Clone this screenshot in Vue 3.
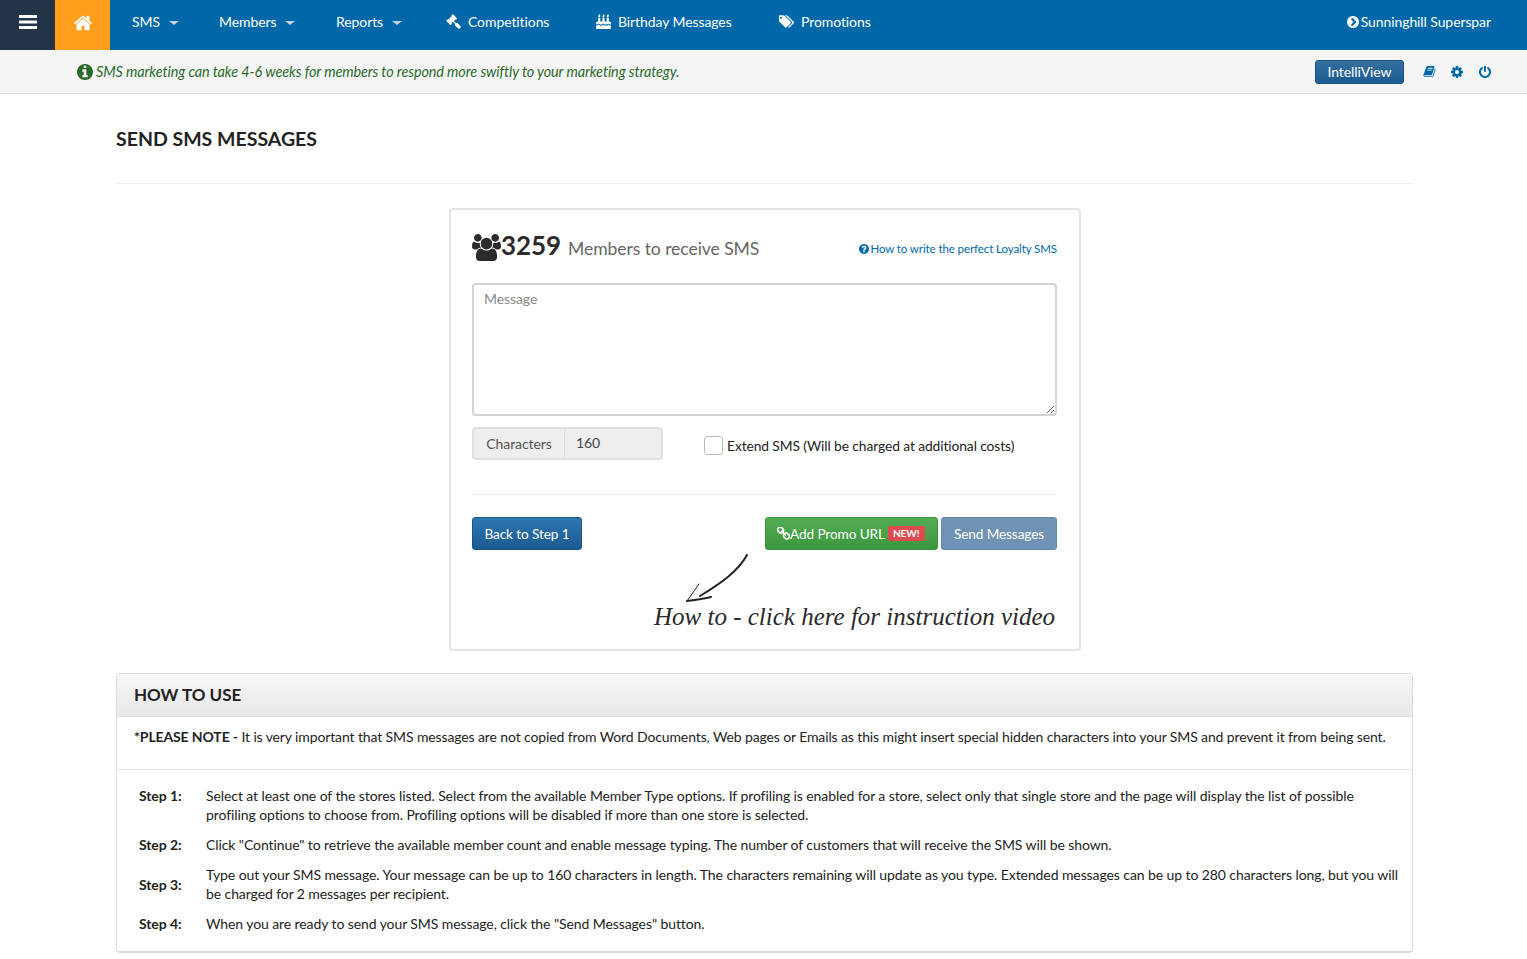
<template>
    <div class="page">
        <header class="topbar">
            <button class="topbar__burger" aria-label="Menu">
                <svg width="18" height="14" viewBox="0 0 18 14" fill="#fff">
                    <rect y="0" width="18" height="3" rx="0.5"></rect>
                    <rect y="5.5" width="18" height="3" rx="0.5"></rect>
                    <rect y="11" width="18" height="3" rx="0.5"></rect>
                </svg>
            </button>
            <a class="topbar__home" href="#">
                <svg width="20" height="20" viewBox="0 0 1792 1792" fill="#fff"><path :d="icons.home"></path></svg>
            </a>
            <nav class="topbar__nav">
                <a v-for="item in menus" :key="item.label" class="topbar__item" :style="{ width: item.width + 'px' }" href="#">{{ item.label }}<i class="caret"></i></a>
                <a v-for="item in links" :key="item.label" class="topbar__item topbar__item--icon" :style="{ width: item.width + 'px' }" href="#">
                    <svg width="15" height="15" :viewBox="item.box" fill="#fff"><path :d="item.icon"></path></svg>
                    {{ item.label }}
                </a>
            </nav>
            <a class="topbar__store" href="#">
                <svg width="12" height="12" viewBox="128 128 1536 1536" fill="#fff"><path :d="icons.chevron"></path></svg>
                Sunninghill Superspar
            </a>
        </header>

        <div class="tipbar">
            <svg class="tipbar__info" width="16" height="16" viewBox="128 128 1536 1536" fill="#2b6a2c"><path :d="icons.info"></path></svg>
            <em class="tipbar__text">SMS marketing can take 4-6 weeks for members to respond more swiftly to your marketing strategy.</em>
            <button class="tipbar__btn">IntelliView</button>
            <a class="tipbar__icon" href="#"><svg width="13" height="13" viewBox="0 0 1792 1792" fill="#0068a8"><path :d="icons.book"></path></svg></a>
            <a class="tipbar__icon" href="#"><svg width="12" height="12" viewBox="128 128 1536 1536" fill="#0068a8"><path :d="icons.cog"></path></svg></a>
            <a class="tipbar__icon" href="#"><svg width="12" height="12" viewBox="128 128 1536 1536" fill="#0068a8"><path :d="icons.power"></path></svg></a>
        </div>

        <main class="content">
            <h1 class="content__title">SEND SMS MESSAGES</h1>

            <section class="card">
                <div class="card__head">
                    <svg width="29" height="27" viewBox="0 0 1920 1792" fill="#2b2b2b"><path :d="icons.users"></path></svg>
                    <strong class="card__count">3259</strong>
                    <span class="card__sub">Members to receive SMS</span>
                    <a class="card__help" href="#">
                        <svg width="10" height="10" viewBox="128 128 1536 1536" fill="#0068a8"><path :d="icons.question"></path></svg>How to write the perfect Loyalty SMS
                    </a>
                </div>

                <textarea class="card__message" placeholder="Message"></textarea>

                <div class="card__options">
                    <div class="chars">
                        <span class="chars__label">Characters</span>
                        <span class="chars__value">160</span>
                    </div>
                    <label class="extend">
                        <input class="extend__box" type="checkbox">
                        Extend SMS (Will be charged at additional costs)
                    </label>
                </div>

                <div class="card__actions">
                    <button class="btn btn--blue">Back to Step 1</button>
                    <div class="card__actions-right">
                        <button class="btn btn--green">
                            <svg width="13" height="13" viewBox="128 128 1536 1536" fill="#fff"><path :d="icons.link"></path></svg>Add Promo URL
                            <span class="badge">NEW!</span>
                        </button>
                        <button class="btn btn--muted">Send Messages</button>
                    </div>
                </div>

                <a class="howto" href="#">
                    <svg class="howto__arrow" width="70" height="50" viewBox="0 0 70 50" fill="none" stroke="#222" stroke-linecap="round">
                        <path d="M62 1C53 17 38 28 15 42" stroke-width="2"></path>
                        <path d="M14 30L2 47" stroke-width="1"></path>
                        <path d="M2 47C10 46 18 45 26 43" stroke-width="2"></path>
                    </svg>
                    <span class="howto__text">How to - click here for instruction video</span>
                </a>
            </section>

            <section class="panel">
                <h2 class="panel__head">HOW TO USE</h2>
                <p class="panel__note"><b>*PLEASE NOTE -</b> <span>It is very important that SMS messages are not copied from Word Documents, Web pages or Emails as this might insert special hidden characters into your SMS and prevent it from being sent.</span></p>
                <div class="steps">
                    <template v-for="step in steps" :key="step.name">
                        <b class="steps__name" :class="{ 'steps__name--top': step.top }">{{ step.name }}</b>
                        <span class="steps__text">{{ step.text }}</span>
                    </template>
                </div>
            </section>
        </main>
    </div>
</template>

<script setup>
const icons = {
    home: 'M1472 992v480q0 26-19 45t-45 19h-384v-384h-256v384h-384q-26 0-45-19t-19-45v-480q0-1 .5-3t.5-3l575-474 575 474q1 2 1 6zm223-69l-62 74q-8 9-21 11h-3q-13 0-21-7l-692-577-692 577q-12 8-24 7-13-2-21-11l-62-74q-8-10-7-23.5t11-21.5l719-599q32-26 76-26t76 26l244 204v-195q0-14 9-23t23-9h192q14 0 23 9t9 23v408l219 182q10 8 11 21.5t-7 23.5z',
    users: 'M593 896q-162 5-265 128h-134q-82 0-138-40.5t-56-118.5q0-353 124-353 6 0 43.5 21t97.5 42.5 119 21.5q67 0 133-23-5 37-5 66 0 139 81 256zm1071 637q0 120-73 189.5t-194 69.5h-874q-121 0-194-69.5t-73-189.5q0-53 3.5-103.5t14-109 26.5-108.5 43-97.5 62-81 85.5-53.5 111.5-20q10 0 43 21.5t73 48 107 48 135 21.5 135-21.5 107-48 73-48 43-21.5q61 0 111.5 20t85.5 53.5 62 81 43 97.5 26.5 108.5 14 109 3.5 103.5zm-1024-1277q0 106-75 181t-181 75-181-75-75-181 75-181 181-75 181 75 75 181zm704 384q0 159-112.5 271.5t-271.5 112.5-271.5-112.5-112.5-271.5 112.5-271.5 271.5-112.5 271.5 112.5 112.5 271.5zm576 225q0 78-56 118.5t-138 40.5h-134q-103-123-265-128 81-117 81-256 0-29-5-66 66 23 133 23 59 0 119-21.5t97.5-42.5 43.5-21q124 0 124 353zm-128-609q0 106-75 181t-181 75-181-75-75-181 75-181 181-75 181 75 75 181z',
    info: 'M1152 1376v-160q0-14-9-23t-23-9h-96v-512q0-14-9-23t-23-9h-320q-14 0-23 9t-9 23v160q0 14 9 23t23 9h96v320h-96q-14 0-23 9t-9 23v160q0 14 9 23t23 9h448q14 0 23-9t9-23zm-128-896v-160q0-14-9-23t-23-9h-192q-14 0-23 9t-9 23v160q0 14 9 23t23 9h192q14 0 23-9t9-23zm640 416q0 209-103 385.5t-279.5 279.5-385.5 103-385.5-103-279.5-279.5-103-385.5 103-385.5 279.5-279.5 385.5-103 385.5 103 279.5 279.5 103 385.5z',
    question: 'M1024 1376v-192q0-14-9-23t-23-9h-192q-14 0-23 9t-9 23v192q0 14 9 23t23 9h192q14 0 23-9t9-23zm256-672q0-88-55.5-163t-138.5-116-170-41q-243 0-371 213-15 24 8 42l132 100q7 6 19 6 16 0 25-12 53-68 86-92 34-24 86-24 48 0 85.5 26t37.5 59q0 38-20 61t-68 45q-63 28-115.5 86.5t-52.5 125.5v36q0 14 9 23t23 9h192q14 0 23-9t9-23q0-19 21.5-49.5t54.5-49.5q32-18 49-28.5t46-35 44.5-48 28-60.5 12.5-81zm384 192q0 209-103 385.5t-279.5 279.5-385.5 103-385.5-103-279.5-279.5-103-385.5 103-385.5 279.5-279.5 385.5-103 385.5 103 279.5 279.5 103 385.5z',
    chevron: 'M845 1395l454-454q19-19 19-45t-19-45l-454-454q-19-19-45-19t-45 19l-102 102q-19 19-19 45t19 45l307 307-307 307q-19 19-19 45t19 45l102 102q19 19 45 19t45-19zm819-499q0 209-103 385.5t-279.5 279.5-385.5 103-385.5-103-279.5-279.5-103-385.5 103-385.5 279.5-279.5 385.5-103 385.5 103 279.5 279.5 103 385.5z',
    cog: 'M1152 896q0-106-75-181t-181-75-181 75-75 181 75 181 181 75 181-75 75-181zm512-109v222q0 12-8 23t-20 13l-185 28q-19 54-39 91 35 50 107 138 10 12 10 25t-9 23q-27 37-99 108t-94 71q-12 0-26-9l-138-108q-44 23-91 38-16 136-29 186-7 28-36 28h-222q-14 0-24.5-8.5t-11.5-21.5l-28-184q-49-16-90-37l-141 107q-10 9-25 9-14 0-25-11-126-114-165-168-7-10-7-23 0-12 8-23 15-21 51-66.5t54-70.5q-27-50-41-99l-183-27q-13-2-21-12.5t-8-23.5v-222q0-12 8-23t19-13l186-28q14-46 39-92-40-57-107-138-10-12-10-24 0-10 9-23 26-36 98.5-107.5t94.5-71.5q13 0 26 10l138 107q44-23 91-38 16-136 29-186 7-28 36-28h222q14 0 24.5 8.5t11.5 21.5l28 184q49 16 90 37l142-107q9-9 24-9 13 0 25 10 129 119 165 170 7 8 7 22 0 12-8 23-15 21-51 66.5t-54 70.5q26 50 41 98l183 28q13 2 21 12.5t8 23.5z',
    power: 'M1664 896q0 156-61 298t-164 245-245 164-298 61-298-61-245-164-164-245-61-298q0-182 80.5-343t226.5-270q43-32 95.5-25t83.5 50q32 42 24.5 94.5t-49.5 84.5q-98 74-151.5 181t-53.5 228q0 104 40.5 198.5t109.5 163.5 163.5 109.5 198.5 40.5 198.5-40.5 163.5-109.5 109.5-163.5 40.5-198.5q0-121-53.5-228t-151.5-181q-42-32-49.5-84.5t24.5-94.5q31-43 84-50t95 25q146 109 226.5 270t80.5 343zm-640-768v640q0 52-38 90t-90 38-90-38-38-90v-640q0-52 38-90t90-38 90 38 38 90z',
    tags: 'M384 448q0-53-37.5-90.5t-90.5-37.5-90.5 37.5-37.5 90.5 37.5 90.5 90.5 37.5 90.5-37.5 37.5-90.5zm1067 576q0 53-37 90l-491 492q-39 37-91 37-53 0-90-37l-715-716q-38-37-64.5-101t-26.5-117v-416q0-52 38-90t90-38h416q53 0 117 26.5t102 64.5l715 714q37 39 37 91zm384 0q0 53-37 90l-491 492q-39 37-91 37-36 0-59-14t-53-45l470-470q37-37 37-90 0-52-37-91l-715-714q-38-38-102-64.5t-117-26.5h224q53 0 117 26.5t102 64.5l715 714q37 39 37 91z',
    gavel: 'M1771 1536q0 53-37 90l-107 108q-39 37-91 37-53 0-90-37l-363-364q-38-36-38-90 0-53 43-96l-256-256-126 126q-14 14-34 14t-34-14q2 2 12.5 12t12.5 13 10 11.5 10 13.5 6 13.5 5.5 16.5 1.5 18q0 38-28 68-3 3-16.5 18t-19 20.5-18.5 16.5-22 15.5-22 9-26 4.5q-40 0-68-28l-408-408q-28-28-28-68 0-13 4.5-26t9-22 15.5-22 16.5-18.5 20.5-19 18-16.5q30-28 68-28 10 0 18 1.5t16.5 5.5 13.5 6 13.5 10 11.5 10 13 12.5 12 12.5q-14-14-14-34t14-34l348-348q14-14 34-14t34 14q-2-2-12.5-12t-12.5-13-10-11.5-10-13.5-6-13.5-5.5-16.5-1.5-18q0-38 28-68 3-3 16.5-18t19-20.5 18.5-16.5 22-15.5 22-9 26-4.5q40 0 68 28l408 408q28 28 28 68 0 13-4.5 26t-9 22-15.5 22-16.5 18.5-20.5 19-18 16.5q-30 28-68 28-10 0-18-1.5t-16.5-5.5-13.5-6-13.5-10-11.5-10-13-12.5-12-12.5q14 14 14 34t-14 34l-126 126 256 256q43-43 96-43 52 0 91 37l363 363q37 39 37 91z',
    cake: 'M1792 1408v384h-1792v-384q45 0 85-14t59-27.5 47-37.5q30-27 51.5-38t56.5-11q24 0 44 7t31 15 33 27q29 25 47 38t58 27 86 14q45 0 85-14.5t58-27 48-37.5q21-19 32.5-27t31-15 43.5-7q35 0 56.5 11t51.5 38q28 24 47 37.5t59 27.5 85 14 85-14 59-27.5 47-37.5q30-27 51.5-38t56.5-11q34 0 55.5 11t51.5 38q29 25 47 38t58 27 86 14zm0-320v192q-24 0-44-7t-31-15-33-27q-29-25-47-38t-58-27-85-14q-46 0-86 14t-58 27-47 38q-22 19-33 27t-31 15-44 7q-35 0-56.5-11t-51.5-38q-29-25-47-38t-58-27-86-14q-45 0-85 14.5t-58 27-48 37.5q-21 19-32.5 27t-31 15-43.5 7q-35 0-56.5-11t-51.5-38q-28-24-47-37.5t-59-27.5-85-14q-46 0-86 14t-58 27-47 38q-30 27-51.5 38t-56.5 11v-192q0-80 56-136t136-56h64v-448h256v448h256v-448h256v448h256v-448h256v448h64q80 0 136 56t56 136zm-1280-864q0 77-36 118.5t-92 41.5q-53 0-90.5-37.5t-37.5-90.5q0-29 9.5-51t23.5-34 31-28 31-31.5 23.5-44.5 9.5-67q38 0 83 74t45 150zm512 0q0 77-36 118.5t-92 41.5q-53 0-90.5-37.5t-37.5-90.5q0-29 9.5-51t23.5-34 31-28 31-31.5 23.5-44.5 9.5-67q38 0 83 74t45 150zm512 0q0 77-36 118.5t-92 41.5q-53 0-90.5-37.5t-37.5-90.5q0-29 9.5-51t23.5-34 31-28 31-31.5 23.5-44.5 9.5-67q38 0 83 74t45 150z',
    book: 'M1703 478q40 57 18 129l-275 906q-19 64-76.5 107.5t-122.5 43.5h-923q-77 0-148.5-53.5t-99.5-131.5q-24-67-2-127 0-4 3-27t4-37q1-8-3-21.5t-3-19.5q2-11 8-21t16.5-23.5 16.5-23.5q23-38 45-91.5t30-91.5q3-10 .5-30t-.5-28q3-11 17-28t17-23q21-36 42-92t25-90q1-9-2.5-32t.5-28q4-13 22-30.5t22-22.5q19-26 42.5-84.5t27.5-96.5q1-8-3-25.5t-2-26.5q2-8 9-18t18-23 17-21q8-12 16.5-30.5t15-35 16-36 19.5-32 26.5-23.5 36-11.5 47.5 5.5l-1 3q38-9 51-9h761q74 0 114 56t18 130l-274 906q-36 119-71.5 153.5t-128.5 34.5h-869q-27 0-38 15-11 16-1 43 24 70 144 70h923q29 0 56-15.5t35-41.5l300-987q7-22 5-57 38 15 59 43zm-1064 2q-4 13 2 22.5t20 9.5h608q13 0 25.5-9.5t16.5-22.5l21-64q4-13-2-22.5t-20-9.5h-608q-13 0-25.5 9.5t-16.5 22.5zm-83 256q-4 13 2 22.5t20 9.5h608q13 0 25.5-9.5t16.5-22.5l21-64q4-13-2-22.5t-20-9.5h-608q-13 0-25.5 9.5t-16.5 22.5z',
    link: 'M1520 1216q0-40-28-68l-208-208q-28-28-68-28-42 0-72 32 3 3 19 18.5t21.5 21.5 15 19 13 25.5 3.5 27.5q0 40-28 68t-68 28q-15 0-27.5-3.5t-25.5-13-19-15-21.5-21.5-18.5-19q-33 31-33 73 0 40 28 68l206 207q27 27 68 27 40 0 68-26l147-146q28-28 28-67zm-703-705q0-40-28-68l-206-207q-28-28-68-28-39 0-68 27l-147 146q-28 28-28 67 0 40 28 68l208 208q27 27 68 27 42 0 72-31-3-3-19-18.5t-21.5-21.5-15-19-13-25.5-3.5-27.5q0-40 28-68t68-28q15 0 27.5 3.5t25.5 13 19 15 21.5 21.5 18.5 19q33-31 33-73zm895 705q0 120-85 203l-147 146q-83 83-203 83-121 0-204-85l-206-207q-83-83-83-203 0-123 88-209l-88-88q-86 88-208 88-120 0-204-84l-208-208q-84-84-84-204t85-203l147-146q83-83 203-83 121 0 204 85l206 207q83 83 83 203 0 123-88 209l88 88q86-88 208-88 120 0 204 84l208 208q84 84 84 204z'
}

// ширины пунктов подобраны по макету
const menus = [
    { label: 'SMS', width: 87 },
    { label: 'Members', width: 117 },
    { label: 'Reports', width: 132 }
]

const links = [
    { label: 'Competitions', icon: icons.gavel, box: '0 0 1792 1792', width: 150 },
    { label: 'Birthday Messages', icon: icons.cake, box: '0 0 1792 1792', width: 183 },
    { label: 'Promotions', icon: icons.tags, box: '0 0 1835 1792', width: 140 }
]

const steps = [
    { name: 'Step 1:', top: true, text: 'Select at least one of the stores listed. Select from the available Member Type options. If profiling is enabled for a store, select only that single store and the page will display the list of possible profiling options to choose from. Profiling options will be disabled if more than one store is selected.' },
    { name: 'Step 2:', text: 'Click "Continue" to retrieve the available member count and enable message typing. The number of customers that will receive the SMS will be shown.' },
    { name: 'Step 3:', text: 'Type out your SMS message. Your message can be up to 160 characters in length. The characters remaining will update as you type. Extended messages can be up to 280 characters long, but you will be charged for 2 messages per recipient.' },
    { name: 'Step 4:', text: 'When you are ready to send your SMS message, click the "Send Messages" button.' }
]
</script>

<style>
body {
    background: #fff;
}
</style>

<style scoped>
.page {
    font-family: Lato, "Noto Sans", sans-serif;
    font-size: 14px;
    line-height: 19px;
    letter-spacing: -0.09px;
    color: #222;
}

a {
    text-decoration: none;
    color: inherit;
}

button {
    font-family: inherit;
    letter-spacing: inherit;
    white-space: nowrap;
}

/* top navigation */
.topbar {
    display: flex;
    align-items: stretch;
    height: 50px;
    background: #0068a8;
    color: #fff;
}

.topbar__burger {
    width: 55px;
    padding: 0 0 4px;
    border: none;
    background: #223445;
}

.topbar__home {
    display: flex;
    align-items: center;
    justify-content: center;
    width: 55px;
    padding-bottom: 4px;
    background: #ff9f1a;
}

.topbar__nav {
    display: flex;
}

.topbar__item {
    display: flex;
    align-items: center;
    gap: 9px;
    box-sizing: border-box;
    padding: 0 0 7px 22px;
}

.topbar__item--icon {
    gap: 7px;
    padding-left: 0;
}

.caret {
    width: 0;
    height: 0;
    margin-top: 3px;
    border-top: 4px solid #c4d3e0;
    border-left: 5px solid transparent;
    border-right: 5px solid transparent;
}

.topbar__store {
    display: flex;
    align-items: center;
    gap: 2px;
    margin-left: auto;
    padding: 0 36px 7px 0;
}

/* tip bar */
.tipbar {
    display: flex;
    align-items: center;
    height: 43px;
    padding: 0 28px 0 77px;
    background: #f5f5f5;
    border-bottom: 1px solid #d9d9d9;
}

.tipbar__info {
    margin-right: 3px;
}

.tipbar__text {
    flex: 1;
    font-size: 14.4px;
    color: #2b6a2c;
}

.tipbar__btn {
    width: 89px;
    height: 24px;
    margin-right: 11px;
    padding: 0;
    font-size: 14px;
    color: #fff;
    background: linear-gradient(#33709f, #1d5a92);
    border: 1px solid #1c527f;
    border-radius: 3px;
}

.tipbar__icon {
    display: flex;
    width: 28px;
    justify-content: center;
}

/* content */
.content {
    width: 1297px;
    margin-left: 116px;
    padding-bottom: 8px;
}

.content__title {
    margin: 0;
    padding: 32px 0 31px;
    font-size: 19.5px;
    line-height: 26px;
    font-weight: 700;
    letter-spacing: 0;
    color: #222;
    border-bottom: 1px solid #eee;
}

.card {
    box-sizing: border-box;
    width: 632px;
    height: 443px;
    margin: 24px 0 22px 333px;
    padding: 19px 22px 0 21px;
    background: #fff;
    border: 2px solid #e4e4e4;
    border-radius: 4px;
}

.card__head {
    display: flex;
    align-items: center;
    height: 36px;
    margin-bottom: 18px;
}

.card__count {
    padding-bottom: 4px;
    font-size: 26px;
    color: #2b2b2b;
}

.card__sub {
    margin-left: 7px;
    padding-top: 3px;
    font-size: 17.6px;
    color: #666;
}

.card__help {
    display: flex;
    align-items: center;
    gap: 1px;
    margin-left: auto;
    padding-top: 3px;
    font-size: 11.5px;
    color: #0068a8;
}

.card__message {
    display: block;
    box-sizing: border-box;
    width: 100%;
    height: 133px;
    padding: 4px 10px;
    font-family: inherit;
    font-size: 14px;
    line-height: 19px;
    letter-spacing: inherit;
    border: 2px solid #d4d4d4;
    border-radius: 4px;
    outline: none;
}

.card__message::placeholder {
    color: #888;
}

.card__options {
    display: flex;
    align-items: center;
    gap: 41px;
    margin-top: 11px;
    padding-bottom: 34px;
    border-bottom: 1px solid #eee;
}

.chars {
    display: flex;
    box-sizing: border-box;
    width: 191px;
    height: 33px;
    background: #eee;
    border: 2px solid #e0e0e0;
    border-radius: 4px;
    color: #555;
}

.chars__label {
    display: flex;
    align-items: center;
    justify-content: center;
    width: 90px;
    border-right: 1px solid #ddd;
}

.chars__value {
    display: flex;
    align-items: center;
    padding: 0 0 2px 11px;
    color: #444;
}

.extend {
    display: flex;
    align-items: center;
    gap: 4px;
    padding-top: 3px;
    font-size: 13.8px;
}

.extend__box {
    appearance: none;
    width: 19px;
    height: 19px;
    margin: 0;
    background: #fff;
    border: 1px solid #bbb;
    border-radius: 3px;
}

.card__actions {
    display: flex;
    justify-content: space-between;
    margin-top: 22px;
}

.card__actions-right {
    display: flex;
    gap: 3px;
}

.btn {
    display: flex;
    align-items: center;
    justify-content: center;
    box-sizing: border-box;
    height: 33px;
    padding: 0;
    font-size: 13.6px;
    color: #fff;
    border-radius: 3px;
}

.btn--blue {
    width: 110px;
    background: linear-gradient(#2d77b0, #1c5a92);
    border: 1px solid #1c5486;
}

.btn--green {
    justify-content: flex-start;
    width: 173px;
    padding-left: 11px;
    background: linear-gradient(#52ad54, #3b963e);
    border: 1px solid #3d943f;
}

.btn--muted {
    width: 116px;
    background: #6f92b5;
    border: 1px solid #6488ab;
}

.badge {
    margin-left: 3px;
    padding: 0 5px;
    font-size: 10px;
    line-height: 15px;
    font-weight: 700;
    letter-spacing: 0;
    background: #dd4b4e;
    border-radius: 2px;
}

.howto {
    display: block;
    margin: 4px 0 0 182px;
}

.howto__arrow {
    display: block;
    margin-left: 31px;
}

.howto__text {
    display: block;
    font-family: "Liberation Serif", serif;
    font-style: italic;
    font-size: 25px;
    line-height: 26px;
    letter-spacing: 0;
    white-space: nowrap;
    color: #2a2a2a;
}

/* how to use */
.panel {
    background: #fff;
    border: 1px solid #dcdcdc;
    border-bottom-width: 2px;
    border-radius: 4px;
}

.panel__head {
    margin: 0;
    padding: 0 17px;
    font-size: 17px;
    line-height: 42px;
    font-weight: 700;
    letter-spacing: 0;
    color: #222;
    background: linear-gradient(#f7f7f7, #e8e8e8);
    border-bottom: 1px solid #ddd;
}

.panel__note {
    margin: 0;
    padding: 10px 17px 23px;
    letter-spacing: -0.12px;
    border-bottom: 1px solid #e4e4e4;
}

.steps {
    display: grid;
    grid-template-columns: 67px 1fr;
    align-items: center;
    row-gap: 11px;
    padding: 16px 11px 18px 22px;
}

.steps__name--top {
    align-self: start;
}
</style>
